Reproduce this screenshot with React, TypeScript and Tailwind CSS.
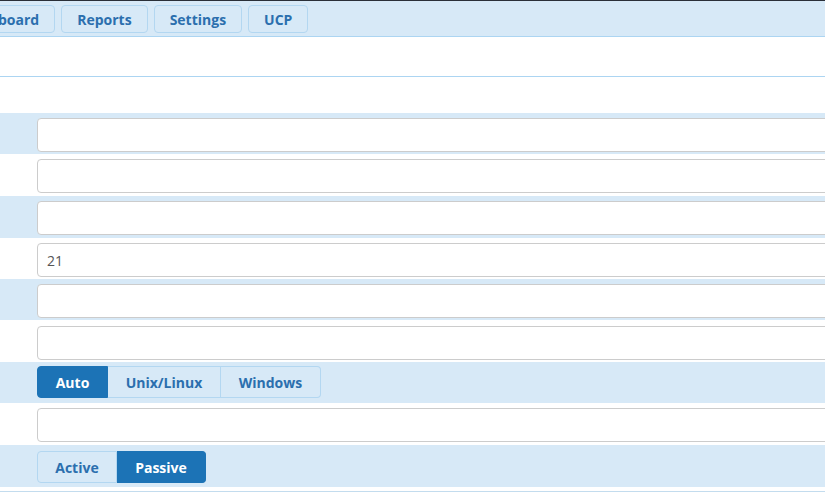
import React from "react";

const font = { fontFamily: '"Open Sans", "Liberation Sans", sans-serif' };

function Tab({ label, first }: { label: string; first?: boolean }) {
  return (
    <div
      className={`h-[28px] px-[15px] flex items-center rounded-[4px] border border-[#b3d7f1] bg-[#d7e9f7] text-[14px] font-bold text-[#2b6fae] whitespace-nowrap ${first ? "ml-[-53px]" : ""}`}
    >
      {label}
    </div>
  );
}

function Input({ value }: { value?: string }) {
  return (
    <div className="h-[34px] w-[800px] rounded-[4px] border border-[#cccccc] bg-white flex items-center pl-[9px] text-[14px] text-[#555555]">
      {value}
    </div>
  );
}

function Seg({ items, active }: { items: { label: string; w: number }[]; active: number }) {
  return (
    <div className="flex h-[32px]">
      {items.map((it, i) => {
        const isA = i === active;
        const first = i === 0;
        const last = i === items.length - 1;
        return (
          <div
            key={it.label}
            style={{ width: it.w }}
            className={`flex items-center justify-center text-[14px] font-bold border ${
              isA
                ? "bg-[#1c73b6] border-[#1c73b6] text-white"
                : "bg-[#d7e9f7] border-[#b3d7f1] text-[#2b6fae]"
            } ${first ? "rounded-l-[4px]" : "border-l-0"} ${last ? "rounded-r-[4px]" : ""}`}
          >
            {it.label}
          </div>
        );
      })}
    </div>
  );
}

function Row({
  blue,
  h,
  children,
  pt,
}: {
  blue: boolean;
  h: number;
  children: React.ReactNode;
  pt: number;
}) {
  return (
    <div
      style={{ height: h, paddingTop: pt }}
      className={`pl-[37px] ${blue ? "bg-[#d7e9f7]" : "bg-white"}`}
    >
      {children}
    </div>
  );
}

export default function App() {
  return (
    <div className="w-[825px] h-[504px] overflow-hidden bg-white" style={font}>
      <div className="h-[1px] bg-[#2a2f38]" />
      <div className="h-[36px] bg-[#d7e9f7] border-b border-[#acd5f2] flex items-start pt-[4px] gap-[6px]">
        <Tab label="Dashboard" first />
        <Tab label="Reports" />
        <Tab label="Settings" />
        <Tab label="UCP" />
      </div>
      <div className="h-[40px] bg-white border-b border-[#acd5f2]" />
      <div className="h-[36px] bg-white" />
      <Row blue h={41} pt={5}>
        <Input />
      </Row>
      <Row blue={false} h={42} pt={5}>
        <Input />
      </Row>
      <Row blue h={42} pt={5}>
        <Input />
      </Row>
      <Row blue={false} h={41} pt={5}>
        <Input value="21" />
      </Row>
      <Row blue h={41} pt={5}>
        <Input />
      </Row>
      <Row blue={false} h={42} pt={6}>
        <Input />
      </Row>
      <Row blue h={41} pt={4}>
        <Seg
          items={[
            { label: "Auto", w: 71 },
            { label: "Unix/Linux", w: 113 },
            { label: "Windows", w: 100 },
          ]}
          active={0}
        />
      </Row>
      <Row blue={false} h={42} pt={5}>
        <Input />
      </Row>
      <Row blue h={42} pt={6}>
        <Seg
          items={[
            { label: "Active", w: 80 },
            { label: "Passive", w: 89 },
          ]}
          active={1}
        />
      </Row>
      <div className="h-[4px] bg-white" />
      <div className="h-[1px] bg-[#c3dcee]" />
    </div>
  );
}
